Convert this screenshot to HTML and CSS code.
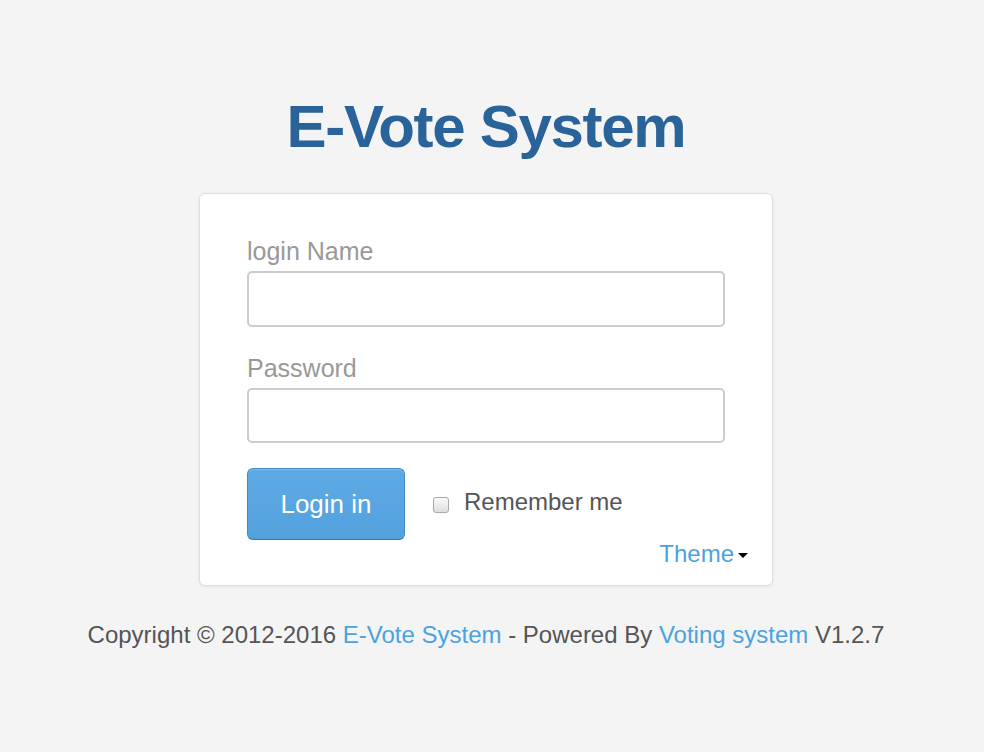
FILE: index.html
```html
<!DOCTYPE html>
<html>
<head>
<meta charset="utf-8">
<title>E-Vote System</title>
<link rel="stylesheet" href="styles.css">
</head>
<body>
<div class="page">
  <h1 class="title">E-Vote System</h1>
  <div class="card">
    <form class="form">
      <label class="label" for="login">login Name</label>
      <input class="input" id="login" type="text">
      <label class="label label-pw" for="pw">Password</label>
      <input class="input input-pw" id="pw" type="password">
      <div class="actions">
        <button class="btn" type="button">Login in</button>
        <label class="remember"><span class="checkbox"></span>Remember me</label>
      </div>
      <div class="theme-row">
        <a class="theme" href="#">Theme<span class="caret"></span></a>
      </div>
    </form>
  </div>
  <p class="footer">Copyright © 2012-2016 <a href="#">E-Vote System</a> - Powered By <a href="#">Voting system</a> V1.2.7</p>
</div>
</body>
</html>
```
FILE: styles.css
```css
html, body {
  margin: 0;
  padding: 0;
  background: #f4f4f4;
  font-family: "Liberation Sans", Arial, sans-serif;
}
.page {
  display: flex;
  flex-direction: column;
  align-items: center;
  padding-top: 91px;
  padding-right: 12px;
}
.title {
  margin: 0;
  font-size: 60px;
  line-height: 72px;
  letter-spacing: -1.3px;
  font-weight: bold;
  color: #2a6399;
}
.card {
  margin-top: 30px;
  width: 478px;
  padding: 42px 47px 17px;
  background: #fff;
  border: 1px solid #dedede;
  border-radius: 6px;
  box-shadow: 0 1px 3px rgba(0,0,0,0.07);
}
.form {
  display: flex;
  flex-direction: column;
}
.label {
  font-size: 25px;
  line-height: 30px;
  color: #999;
  margin-bottom: 5px;
}
.label-pw {
  margin-top: 26px;
}
.input {
  box-sizing: border-box;
  height: 56px;
  width: 100%;
  margin: 0;
  border: 2px solid #ccc;
  border-radius: 5px;
  background: #fff;
  outline: none;
}
.input-pw {
  height: 55px;
}
.actions {
  margin-top: 25px;
  display: flex;
  align-items: flex-start;
}
.btn {
  box-sizing: border-box;
  width: 158px;
  height: 72px;
  border: 1px solid #3d8bc9;
  border-bottom-color: #3479b3;
  border-radius: 6px;
  background: linear-gradient(#5faae5, #52a1dd);
  color: #fff;
  font-family: "Liberation Sans", Arial, sans-serif;
  font-size: 26px;
  line-height: 30px;
  padding: 0;
  box-shadow: inset 0 1px 0 rgba(255,255,255,0.2);
}
.remember {
  display: flex;
  align-items: center;
  margin-left: 28px;
  margin-top: 20px;
  font-size: 24px;
  line-height: 28px;
  color: #555;
}
.checkbox {
  display: inline-block;
  box-sizing: border-box;
  width: 16px;
  height: 16px;
  border: 1px solid #a9a9a9;
  border-radius: 3px;
  background: linear-gradient(#fafafa, #dedede);
  margin-right: 15px;
  margin-top: 6px;
}
.theme-row {
  display: flex;
  justify-content: flex-end;
}
.theme {
  font-size: 24px;
  line-height: 28px;
  color: #4aa3df;
  text-decoration: none;
  margin-right: -23px;
  display: flex;
  align-items: center;
}
.caret {
  display: inline-block;
  width: 0;
  height: 0;
  border-left: 5.5px solid transparent;
  border-right: 5.5px solid transparent;
  border-top: 5px solid #000;
  margin-left: 4px;
  margin-top: 2px;
}
.footer {
  margin: 35px 0 0;
  font-size: 24px;
  line-height: 28px;
  color: #555;
}
.footer a {
  color: #4aa3df;
  text-decoration: none;
}
```
